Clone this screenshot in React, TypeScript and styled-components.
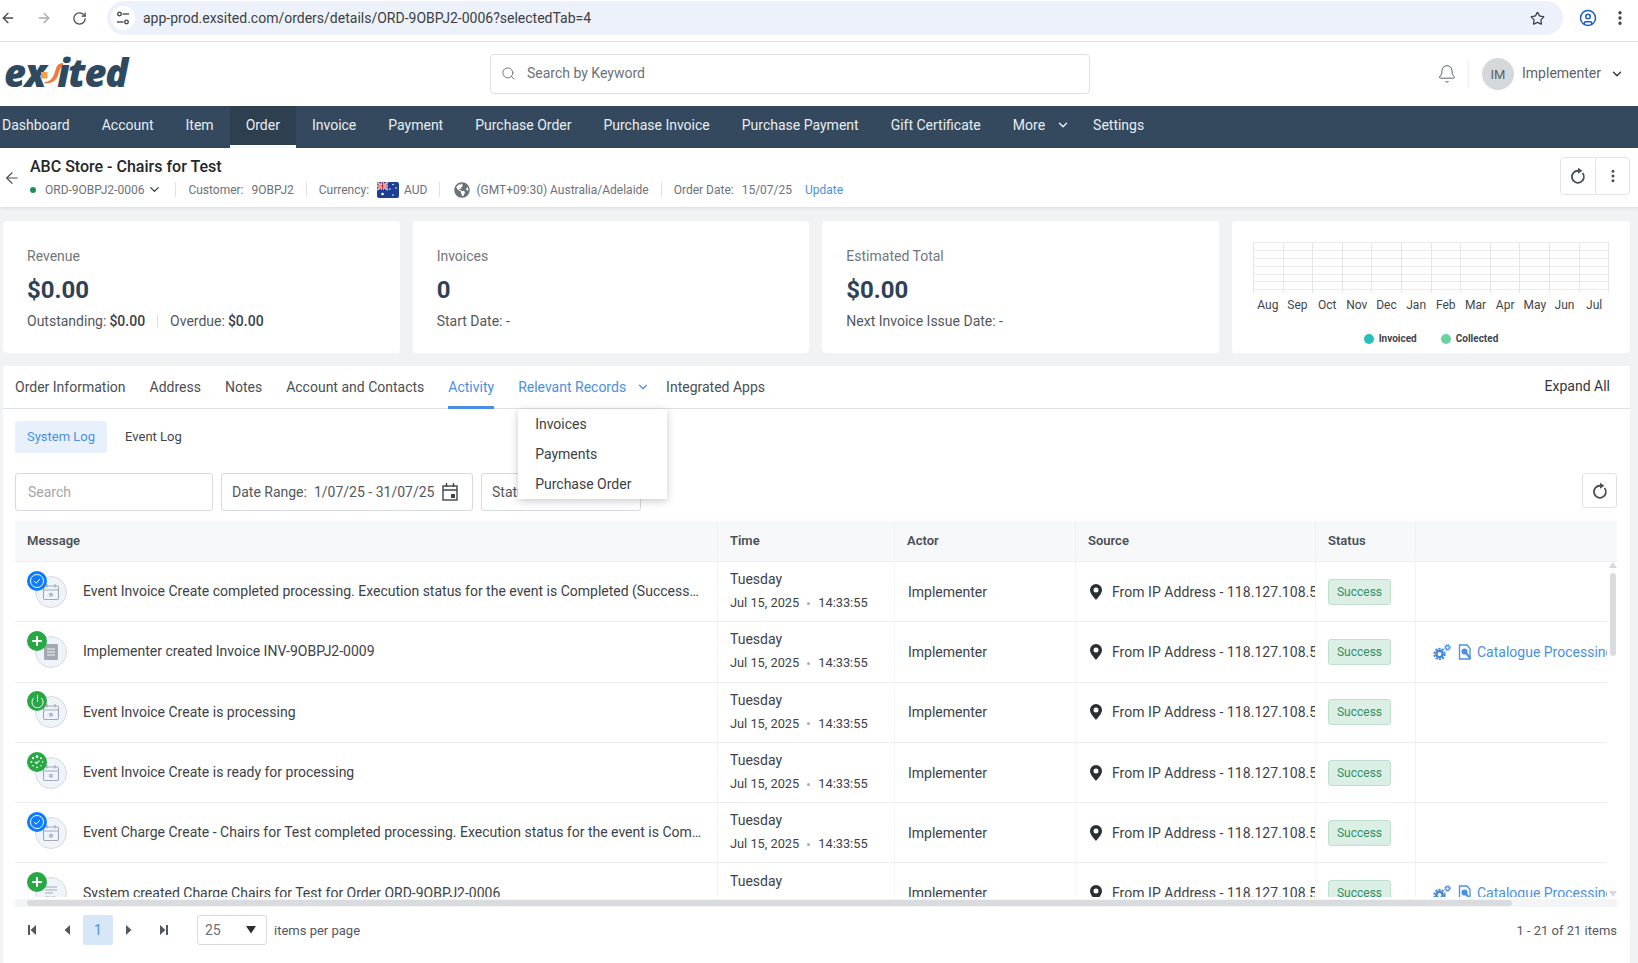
import React from "react";
import styled, { createGlobalStyle } from "styled-components";
import { ArrowLeft, ArrowRight, RotateCw, Star, CircleUser, EllipsisVertical, Search, Bell, ChevronDown, Plus, Power } from "lucide-react";
import { FaGlobeAmericas } from "react-icons/fa";

const Global = createGlobalStyle`
  html, body { margin: 0; padding: 0; background: #f0f2f4; }
  * { box-sizing: border-box; }
  body { font-family: Roboto, "Liberation Sans", sans-serif; font-size: 14px; color: #3d4248; }
`;

const Page = styled.div`
  width: 1638px; height: 963px; overflow: hidden; display: flex; flex-direction: column; background: #f0f2f4;
`;

/* browser chrome */
const BrowserBar = styled.div`
  height: 42px; flex: none; background: #fff; border-bottom: 1px solid #dfe1e4; display: flex; align-items: flex-start;
  padding: 1px 0 0 0;
`;
const NavIcons = styled.div`
  width: 107px; height: 34px; display: flex; align-items: center; flex: none; gap: 20px; color: #474a4f;
`;
const UrlBar = styled.div`
  width: 1456px; height: 34px; border-radius: 17px; background: #edf2fa; display: flex; align-items: center; flex: none;
  padding: 0 18px 0 4px; color: #3c4043; font-size: 14px;
`;
const TuneBadge = styled.span`
  width: 24px; height: 24px; border-radius: 50%; background: #fff; display: flex; align-items: center; justify-content: center; margin-right: 8px; flex: none;
`;
const UrlText = styled.span` flex: 1; `;
const BrowserRight = styled.div`
  height: 34px; flex: 1; display: flex; align-items: center; gap: 14px; padding-left: 16px; color: #1a5fc8;
`;

/* app header */
const Header = styled.header`
  height: 64px; flex: none; background: #fff; display: flex; align-items: center; padding: 0 14px 0 4px;
`;
const Logo = styled.div`
  width: 486px; display: flex; align-items: baseline; color: #2f4a60; font-family: "Open Sans", sans-serif; font-weight: 800; font-style: italic; font-size: 38px; line-height: 40px; letter-spacing: -1.2px; height: 40px; margin-top: -4px;
`;
const LogoSwoosh = styled.svg` width: 24px; height: 30px; margin: 0 -7px 0 -5px; flex: none; align-self: center; `;
const SearchBox = styled.div`
  width: 600px; height: 40px; border: 1px solid #dcdfe3; border-radius: 4px; display: flex; align-items: center; gap: 11px; padding: 0 10px 2px; color: #6c7177; font-size: 14px; flex: none;
`;
const HeaderRight = styled.div` flex: 1; display: flex; align-items: center; justify-content: flex-end; color: #5d6268; `;
const BellWrap = styled.div`
  height: 28px; width: 32px; display: flex; align-items: center; margin-right: 13px; border-right: 1px solid #eceef0; color: #5d6268;
`;
const Avatar = styled.div`
  width: 32px; height: 32px; border-radius: 50%; background: #d5d8db; color: #5c6167; font-size: 13px; display: flex; align-items: center; justify-content: center; margin-right: 8px;
`;
const UserName = styled.span` padding-bottom: 2px; `;
const UserChevron = styled.span` display: flex; margin-left: 9px; color: #33373c; `;

/* nav */
const Nav = styled.nav`
  height: 42px; flex: none; background: #34495e; display: flex; align-items: stretch; color: #e9edf1; font-size: 14px;
`;
const NavItem = styled.a<{ $active?: boolean; $tight?: boolean }>`
  display: flex; align-items: center; gap: 11px; padding: 0 ${(p) => (p.$tight ? "7px" : "16px")} 1px 16px; height: 42px;
  &:first-child { padding-left: 2px; }
  background: ${(p) => (p.$active ? "#2e3f50" : "transparent")};
  border-bottom: 3px solid ${(p) => (p.$active ? "#fff" : "transparent")};
`;

/* order bar */
const OrderBar = styled.div`
  height: 59px; flex: none; background: #fff; box-shadow: 0 1px 4px rgba(0,0,0,.1); display: flex; align-items: center; padding: 0 8px 0 3px; position: relative;
`;
const BackCell = styled.div` width: 27px; display: flex; align-items: center; color: #4a4f55; `;
const OrderInfo = styled.div` flex: 1; display: flex; flex-direction: column; gap: 5px; padding-bottom: 1px; `;
const OrderTitle = styled.div` font-size: 16px; font-weight: 500; color: #23272b; line-height: 20px; `;
const Meta = styled.div` display: flex; align-items: center; font-size: 12px; color: #6c7278; line-height: 16px; `;
const Dot = styled.span` width: 6px; height: 6px; border-radius: 50%; background: #1e8e5a; margin: 0 9px 0 0; `;
const MetaPart = styled.span<{ $gap?: number }>`
  display: inline-flex; align-items: center; gap: ${(p) => p.$gap ?? 8}px;
`;
const MetaSep = styled.span<{ $l?: number; $r?: number }>`
  width: 1px; height: 15px; background: #dfe2e5; flex: none; margin: 0 ${(p) => p.$r ?? 12}px 0 ${(p) => p.$l ?? 12}px;
`;
const OrderChevron = styled.span` display: flex; margin-left: 3px; color: #33373c; `;
const FlagText = styled.span` margin-left: -3px; `;
const LinkText = styled.span` color: #4a90e2; margin-left: 5px; `;
const IconGroup = styled.div`
  display: flex; height: 38px; border: 1px solid #e2e4e7; border-radius: 4px; color: #4a4f55; margin-top: -3px;
`;
const IconCell = styled.div`
  width: 34px; display: flex; align-items: center; justify-content: center;
  & + & { border-left: 1px solid #e2e4e7; }
`;

/* cards */
const Cards = styled.div`
  flex: none; display: grid; grid-template-columns: repeat(4, 1fr); gap: 13px; padding: 14px 8px 13px 3px;
`;
const Card = styled.div`
  height: 132px; background: #fff; border-radius: 4px; padding: 24px 24px 0; display: flex; flex-direction: column;
`;
const CardLabel = styled.div` font-size: 14px; color: #71767c; line-height: 22px; `;
const CardValue = styled.div` font-size: 24px; font-weight: 700; color: #2f4155; line-height: 30px; margin-top: 8px; `;
const CardSub = styled.div` font-size: 14px; color: #53585e; line-height: 20px; margin-top: 6px; display: flex; align-items: center; `;
const SubStrong = styled.span` font-weight: 500; color: #3b4046; margin-left: 3px; `;
const SubSep = styled.span` width: 1px; height: 14px; background: #dfe2e5; margin: 0 12px; `;
const ChartCard = styled(Card)` padding: 21px 21px 0; `;
const ChartSvg = styled.svg` display: block; width: 356px; height: 51px; `;
const Months = styled.div`
  display: grid; grid-template-columns: repeat(12, 1fr); font-size: 12px; color: #3f444a; text-align: center; line-height: 16px; margin-top: 4px;
`;
const Legend = styled.div`
  display: flex; justify-content: center; gap: 24px; margin-top: 19px; font-size: 10px; font-weight: 700; color: #3f444a; line-height: 14px;
`;
const LegendItem = styled.span` display: inline-flex; align-items: center; gap: 5px; `;
const LegendDot = styled.span<{ $c: string }>` width: 10px; height: 10px; border-radius: 50%; background: ${(p) => p.$c}; `;

/* panel */
const Panel = styled.section`
  flex: 1; min-height: 0; background: #fff; margin: 0 8px 0 3px; display: flex; flex-direction: column; padding: 0 13px 0 12px;
`;
const Tabs = styled.div`
  height: 43px; flex: none; border-bottom: 1px solid #dfe2e5; margin: 0 -13px 0 -12px; padding: 0 20px 0 12px; display: flex; align-items: stretch; gap: 24px; font-size: 14px; color: #4a4f55;
`;
const Tab = styled.div<{ $active?: boolean; $blue?: boolean; $tight?: boolean }>`
  display: flex; align-items: center; gap: 10px; height: 43px; position: relative; padding-bottom: 2px;
  color: ${(p) => (p.$active || p.$blue ? "#4a90e2" : "#4a4f55")};
  border-bottom: ${(p) => (p.$active ? "3px solid #4a90e2" : "0")};
  ${(p) => (p.$active ? "padding-bottom: 0; padding-top: 1px;" : "")}
  ${(p) => (p.$tight ? "margin-right: -8px;" : "")}
`;
const ExpandAll = styled.div` margin-left: auto; display: flex; align-items: center; color: #33373c; font-size: 14px; padding-bottom: 3px; `;
const Menu = styled.div`
  position: absolute; left: 0; top: 43px; width: 149px; height: 90px; background: #fff; box-shadow: 0 2px 8px rgba(0,0,0,.22); z-index: 5; padding: 0 17px; color: #3a3f45; display: flex; flex-direction: column; justify-content: space-around;
`;
const SubTabs = styled.div` flex: none; display: flex; margin-top: 12px; height: 32px; font-size: 13px; gap: 6px; `;
const SubTab = styled.div<{ $active?: boolean }>`
  padding: 0 12px 2px; display: flex; align-items: center; border-radius: 3px;
  background: ${(p) => (p.$active ? "#e8f1fb" : "transparent")}; color: ${(p) => (p.$active ? "#4a90e2" : "#3f444a")};
`;
const Filters = styled.div` flex: none; margin-top: 20px; height: 37px; display: flex; gap: 8px; `;
const Field = styled.div<{ $w: number }>`
  width: ${(p) => p.$w}px; height: 38px; border: 1px solid #d6d9dd; border-radius: 3px; display: flex; align-items: center; padding: 0 10px; font-size: 14px; color: #53585e; gap: 7px; white-space: nowrap; overflow: hidden;
`;
const DateValue = styled.span` margin-right: 1px; `;
const Placeholder = styled.span` color: #a2a6ab; padding-left: 2px; `;
const FilterRefresh = styled.div`
  margin-left: auto; width: 35px; height: 35px; border: 1px solid #e0e2e5; border-radius: 3px; display: flex; align-items: center; justify-content: center; color: #4a4f55;
`;

/* table */
const COLS = "702px 177px 181px 240px 100px 192px";
const HeadRow = styled.div`
  flex: none; margin-top: 11px; height: 41px; background: #f7f8fa; border-bottom: 1px solid #eceef0; display: grid; grid-template-columns: ${COLS} 10px;
  font-size: 13px; font-weight: 600; color: #4b5056; padding-bottom: 2px;
`;
const HeadCell = styled.div`
  display: flex; align-items: center; padding-left: 12px; & + & { border-left: 1px solid #eef0f2; }
`;
const BodyWrap = styled.div` flex: none; display: flex; height: 335px; `;
const Clip = styled.div` width: 1592px; overflow: hidden; flex: none; `;
const Row = styled.div`
  height: 60.3px; display: grid; grid-template-columns: ${COLS}; border-bottom: 1px solid #eceef0;
`;
const Cell = styled.div`
  display: flex; align-items: center; padding-left: 13px; min-width: 0; overflow: hidden; white-space: nowrap; color: #3d4248;
  border-left: 1px solid #f3f4f6;
`;
const MsgCell = styled(Cell)` padding-left: 0; border-left: 0; `;
const StatusCell = styled(Cell)` padding-left: 12px; `;
const IconStack = styled.div` width: 68px; height: 60px; flex: none; position: relative; `;
const BigCircle = styled.div`
  position: absolute; left: 20px; top: 14px; width: 32px; height: 32px; border-radius: 50%; background: #eff4fb; border: 1px solid #d6dae0; display: flex; align-items: center; justify-content: center; color: #a3a9b3;
`;
const Badge = styled.div<{ $c: string }>`
  position: absolute; left: 12px; top: 9px; width: 20px; height: 20px; border-radius: 50%; background: ${(p) => p.$c}; color: #fff; display: flex; align-items: center; justify-content: center;
`;
const MsgText = styled.div` min-width: 0; flex: none; width: 620px; overflow: hidden; text-overflow: ellipsis; white-space: nowrap; padding-bottom: 1px; `;
const TimeCell = styled(Cell)` flex-direction: column; align-items: flex-start; justify-content: center; gap: 6px; line-height: 18px; padding-left: 12px; `;
const TimeDay = styled.div` font-size: 14px; margin-top: -1px; `;
const TimeDate = styled.div` font-size: 12.8px; display: flex; align-items: center; gap: 6px; `;
const TimeDot = styled.span` width: 3px; height: 3px; border-radius: 50%; background: #a9adb2; margin: 0 2px; `;
const Source = styled.div` display: flex; align-items: center; gap: 10px; padding-left: 1px; letter-spacing: .04px; `;
const Success = styled.div`
  height: 26px; width: 63px; border: 1px solid #bfdfcf; background: #dcefe5; color: #2f8f66; border-radius: 3px; font-size: 12px; display: flex; align-items: center; justify-content: center;
`;
const ActionLink = styled.div` display: flex; align-items: center; color: #4a90e2; gap: 7px; padding-left: 4px; `;
const LinkLabel = styled.span` margin-left: -2px; `;
const VTrack = styled.div`
  width: 8px; margin-left: 2px; flex: none; display: flex; flex-direction: column; align-items: center; color: #d5d8dc;
`;
const VThumb = styled.div` width: 6px; height: 83px; background: #d9dcdf; border-radius: 3px; margin-top: 5px; `;
const VSpacer = styled.div` flex: 1; `;
const HTrack = styled.div`
  flex: none; height: 8px; margin-top: 2px; background: #f3f4f5; display: flex; align-items: center; padding-left: 12px;
`;
const HThumb = styled.div` width: 1485px; height: 6px; background: #d9dcdf; border-radius: 3px; `;
const Footer = styled.div` flex: none; height: 50px; display: flex; align-items: center; padding-bottom: 4px; font-size: 13px; color: #53585e; `;
const Pager = styled.div<{ $ml?: number }>`
  width: 30px; height: 30px; display: flex; align-items: center; justify-content: center; color: #53585e; margin-left: ${(p) => p.$ml ?? 0}px;
`;
const PageNo = styled(Pager)` background: #d8e7f8; color: #4a90e2; font-size: 14px; border-radius: 2px; `;
const PerPage = styled.div`
  width: 70px; height: 30px; border: 1px solid #d6d9dd; border-radius: 3px; margin: 0 7px 0 19px; display: flex; align-items: center; justify-content: space-between; padding: 0 10px 0 7px; font-size: 14px; color: #6c7177;
`;
const PerPageArrow = styled.span` display: flex; color: #2b2e33; `;
const Range = styled.div` margin-left: auto; font-size: 13px; color: #53585e; `;

const Refresh = ({ size = 18 }: { size?: number }) => (
  <svg width={size} height={size} viewBox="0 0 18 18" fill="none">
    <path d="M9.500 3.800A6 6 0 1 0 13.600 6" stroke="currentColor" strokeWidth="1.800" />
    <path d="M9 .8L13.400 3.800L9 6.800z" fill="currentColor" />
  </svg>
);
const Tune = () => (
  <svg width="14" height="14" viewBox="0 0 14 14" fill="none" stroke="#3c4043" strokeWidth="1.3">
    <circle cx="3.500" cy="3" r="1.800" /><path d="M6.500 3H13" />
    <circle cx="10.500" cy="11" r="1.800" /><path d="M1 11h6.500" />
  </svg>
);
const Flag = () => (
  <svg width="22" height="16" viewBox="0 0 22 16">
    <rect width="22" height="16" rx="2" fill="#1c3f94" />
    <path d="M0 0l11 8M11 0L0 8" stroke="#fff" strokeWidth="1.600" />
    <path d="M0 0l11 8M11 0L0 8" stroke="#d8202f" strokeWidth=".6" />
    <path d="M5.500 0v8M0 4h11" stroke="#fff" strokeWidth="2.400" />
    <path d="M5.500 0v8M0 4h11" stroke="#d8202f" strokeWidth="1.200" />
    <g fill="#fff"><circle cx="5.500" cy="12" r="1.300" /><circle cx="16" cy="2.500" r=".8" /><circle cx="16" cy="13" r=".8" /><circle cx="13" cy="7" r=".8" /><circle cx="19" cy="6" r=".8" /></g>
  </svg>
);
const CalendarGear = () => (
  <svg width="18" height="18" viewBox="0 0 18 18" fill="none" stroke="currentColor" strokeWidth="1.100">
    <rect x="1.500" y="3" width="15" height="13.500" rx="1.500" /><path d="M1.500 7h15M5 1v3.500M13 1v3.500" />
    <circle cx="9" cy="11.700" r="1.400" strokeWidth="1.300" />
  </svg>
);
const DocIcon = () => (
  <svg width="14" height="16" viewBox="0 0 14 16"><rect width="14" height="16" rx="1" fill="#a3a9b3" /><path d="M3 5h8M3 8h8M3 11h8" stroke="#eff4fb" strokeWidth="1.200" /></svg>
);
const ListIcon = () => (
  <svg width="16" height="18" viewBox="0 0 16 18" fill="none" stroke="currentColor" strokeWidth="1.200"><path d="M2 3h12M2 6h12M2 9h8" /><path d="M3 13h3v3H3zM9 13h3v3H9z" fill="currentColor" /></svg>
);
const Spinner = () => (
  <svg width="14" height="14" viewBox="0 0 14 14" fill="#fff">
    <circle cx="7" cy="1.600" r="1.300" /><circle cx="11" cy="3.200" r="1" /><circle cx="12.600" cy="7" r=".8" /><circle cx="3" cy="3.200" r="1.100" /><circle cx="1.400" cy="7" r="1" /><circle cx="3" cy="10.800" r=".8" /><circle cx="7" cy="12.400" r=".8" /><circle cx="11" cy="10.800" r=".7" />
    <path d="M5 7l1.500 1.500L9.400 5.600" stroke="#fff" strokeWidth="1.200" fill="none" />
  </svg>
);
const Pin = () => (
  <svg width="12" height="16" viewBox="0 0 12 16">
    <path fillRule="evenodd" fill="#2b2e33" d="M6 0a6 6 0 0 1 6 6c0 3.800-4.200 7.800-6 10C4.200 13.800 0 9.800 0 6a6 6 0 0 1 6-6zm0 3.500a2.500 2.500 0 1 0 0 5 2.500 2.500 0 0 0 0-5z" />
  </svg>
);
const Gears = () => (
  <svg width="18" height="16" viewBox="0 0 18 16" fill="none" stroke="#3f84d6">
    <circle cx="6.500" cy="10" r="3.200" strokeWidth="2.400" />
    <circle cx="6.500" cy="10" r="5.300" strokeWidth="1.800" strokeDasharray="2.100 1.230" />
    <circle cx="14.500" cy="3.500" r="1.800" strokeWidth="1.200" />
    <circle cx="14.500" cy="3.500" r="2.900" strokeWidth="1" strokeDasharray="1.300 1" />
  </svg>
);
const DocWrench = () => (
  <svg width="14" height="16" viewBox="0 0 14 16" fill="none" stroke="#4a90e2" strokeWidth="1.300">
    <path d="M9 1H1.500v14H12V4.500z" /><circle cx="6.500" cy="7.500" r="2.400" fill="#4a90e2" /><path d="M8 9l4.500 5.500" strokeWidth="2" />
  </svg>
);
const Tri = ({ dir, bar }: { dir: "l" | "r"; bar?: boolean }) => (
  <svg width="9" height="10" viewBox="0 0 9 10" fill="currentColor">
    {dir === "l" ? <path d="M8 0v10L2.500 5z" /> : <path d="M1 0v10L6.500 5z" />}
    {bar && (dir === "l" ? <rect x="0" y="0" width="2" height="10" /> : <rect x="7" y="0" width="2" height="10" />)}
  </svg>
);
const Up = ({ down, size = 8 }: { down?: boolean; size?: number }) => (
  <svg width={size} height={(size * 3) / 4} viewBox="0 0 8 6" fill="currentColor">{down ? <path d="M0 0h8L4 6z" /> : <path d="M0 6h8L4 0z" />}</svg>
);
const CalFilled = () => (
  <svg width="16" height="18" viewBox="0 0 16 18" fill="none" stroke="#3f444a" strokeWidth="1.400">
    <rect x="1" y="3" width="14" height="14" /><path d="M1 7h14M4.500 0v4M11.500 0v4" /><rect x="9" y="11" width="4" height="4" fill="#3f444a" stroke="none" />
  </svg>
);

type RowData = { msg: string; badge: "check" | "plus" | "power" | "spin"; icon: "cal" | "doc" | "list"; link?: boolean };
const rows: RowData[] = [
  { msg: "Event Invoice Create completed processing. Execution status for the event is Completed (Successful).", badge: "check", icon: "cal" },
  { msg: "Implementer created Invoice INV-9OBPJ2-0009", badge: "plus", icon: "doc", link: true },
  { msg: "Event Invoice Create is processing", badge: "power", icon: "cal" },
  { msg: "Event Invoice Create is ready for processing", badge: "spin", icon: "cal" },
  { msg: "Event Charge Create - Chairs for Test completed processing. Execution status for the event is Completed (Successful).", badge: "check", icon: "cal" },
  { msg: "System created Charge Chairs for Test for Order ORD-9OBPJ2-0006", badge: "plus", icon: "list", link: true },
];
const badgeColor = { check: "#0b7bff", plus: "#28a745", power: "#28a745", spin: "#28a745" };
const navItems = ["Dashboard", "Account", "Item", "Order", "Invoice", "Payment", "Purchase Order", "Purchase Invoice", "Purchase Payment", "Gift Certificate"];
const months = ["Aug", "Sep", "Oct", "Nov", "Dec", "Jan", "Feb", "Mar", "Apr", "May", "Jun", "Jul"];

const BadgeIcon = ({ kind }: { kind: RowData["badge"] }) => {
  if (kind === "check")
    return (
      <svg width="16" height="16" viewBox="0 0 16 16" fill="none" stroke="#fff" strokeWidth="1"><circle cx="8" cy="8" r="6.500" /><path d="M5 8l2.200 2.200L11 6" /></svg>
    );
  if (kind === "plus") return <Plus size={14} strokeWidth={3.5} />;
  if (kind === "power") return <Power size={15} strokeWidth={1.5} />;
  return <Spinner />;
};

export default function App() {
  return (
    <Page>
      <Global />
      <BrowserBar>
        <NavIcons>
          <ArrowLeft size={16} strokeWidth={2} />
          <ArrowRight size={16} strokeWidth={2} color="#a9acb0" />
          <RotateCw size={15} strokeWidth={2} />
        </NavIcons>
        <UrlBar>
          <TuneBadge><Tune /></TuneBadge>
          <UrlText>app-prod.exsited.com/orders/details/ORD-9OBPJ2-0006?selectedTab=4</UrlText>
          <Star size={15} color="#3c4043" strokeWidth={2} />
        </UrlBar>
        <BrowserRight>
          <CircleUser size={18} strokeWidth={2} />
          <EllipsisVertical size={18} strokeWidth={2.5} color="#3c4043" />
        </BrowserRight>
      </BrowserBar>

      <Header>
        <Logo>
          ex
          <LogoSwoosh viewBox="0 0 24 30">
            <rect x="1" y="15" width="6.500" height="6.500" fill="#f5a04a" />
            <path d="M23 6c-3 0-5 1-6.500 4l-2 6c-1.500 4-3 8-9.500 9 -1 .2 -1 1.500 0 1.500 7 0 11-3 12.500-7l2-6c.7-2 2-3 3.500-3z" fill="#ee7b3c" />
          </LogoSwoosh>
          ited
        </Logo>
        <SearchBox><Search size={15} strokeWidth={1.5} />Search by Keyword</SearchBox>
        <HeaderRight>
          <BellWrap><Bell size={20} strokeWidth={1.2} /></BellWrap>
          <Avatar>IM</Avatar>
          <UserName>Implementer</UserName>
          <UserChevron><ChevronDown size={14} strokeWidth={2.5} /></UserChevron>
        </HeaderRight>
      </Header>

      <Nav>
        {navItems.map((n) => (<NavItem key={n} $active={n === "Order"}>{n}</NavItem>))}
        <NavItem $tight>More<ChevronDown size={14} strokeWidth={2.5} /></NavItem>
        <NavItem>Settings</NavItem>
      </Nav>

      <OrderBar>
        <BackCell><ArrowLeft size={18} strokeWidth={1.5} /></BackCell>
        <OrderInfo>
          <OrderTitle>ABC Store - Chairs for Test</OrderTitle>
          <Meta>
            <MetaPart $gap={0}><Dot />ORD-9OBPJ2-0006<OrderChevron><ChevronDown size={15} strokeWidth={2} /></OrderChevron></MetaPart>
            <MetaSep $l={13} $r={12} />
            <MetaPart $gap={8}>Customer:<span>9OBPJ2</span></MetaPart>
            <MetaSep />
            <MetaPart $gap={8}>Currency:<Flag /><FlagText>AUD</FlagText></MetaPart>
            <MetaSep $r={14} />
            <MetaPart $gap={6}><FaGlobeAmericas size={16} color="#6c7278" />(GMT+09:30) Australia/Adelaide</MetaPart>
            <MetaSep />
            <MetaPart $gap={8}>Order Date:<span>15/07/25</span><LinkText>Update</LinkText></MetaPart>
          </Meta>
        </OrderInfo>
        <IconGroup>
          <IconCell><Refresh /></IconCell>
          <IconCell><EllipsisVertical size={16} strokeWidth={2.5} /></IconCell>
        </IconGroup>
      </OrderBar>

      <Cards>
        <Card>
          <CardLabel>Revenue</CardLabel>
          <CardValue>$0.00</CardValue>
          <CardSub>Outstanding:<SubStrong>$0.00</SubStrong><SubSep />Overdue:<SubStrong>$0.00</SubStrong></CardSub>
        </Card>
        <Card>
          <CardLabel>Invoices</CardLabel>
          <CardValue>0</CardValue>
          <CardSub>Start Date: -</CardSub>
        </Card>
        <Card>
          <CardLabel>Estimated Total</CardLabel>
          <CardValue>$0.00</CardValue>
          <CardSub>Next Invoice Issue Date: -</CardSub>
        </Card>
        <ChartCard>
          <ChartSvg viewBox="0 0 356 51" fill="none">
            <g stroke="#e9ebed" strokeWidth="1">
              {[0.5, 8.5, 16.5, 24.5, 32.5, 39.5, 47.5].map((y) => (<path key={y} d={`M0 ${y}H356`} />))}
            </g>
            <g stroke="#e4e6e8" strokeWidth="1">
              {Array.from({ length: 13 }, (_, i) => Math.round(i * 29.6) + 0.5).map((x) => (<path key={x} d={`M${x} 0V51`} />))}
            </g>
          </ChartSvg>
          <Months>{months.map((m) => (<span key={m}>{m}</span>))}</Months>
          <Legend>
            <LegendItem><LegendDot $c="#26c0b8" />Invoiced</LegendItem>
            <LegendItem><LegendDot $c="#68d3a3" />Collected</LegendItem>
          </Legend>
        </ChartCard>
      </Cards>

      <Panel>
        <Tabs>
          <Tab>Order Information</Tab>
          <Tab>Address</Tab>
          <Tab>Notes</Tab>
          <Tab>Account and Contacts</Tab>
          <Tab $active>Activity</Tab>
          <Tab $blue $tight>
            Relevant Records<ChevronDown size={14} strokeWidth={2} />
            <Menu><span>Invoices</span><span>Payments</span><span>Purchase Order</span></Menu>
          </Tab>
          <Tab>Integrated Apps</Tab>
          <ExpandAll>Expand All</ExpandAll>
        </Tabs>
        <SubTabs>
          <SubTab $active>System Log</SubTab>
          <SubTab>Event Log</SubTab>
        </SubTabs>
        <Filters>
          <Field $w={198}><Placeholder>Search</Placeholder></Field>
          <Field $w={252}>Date Range:<DateValue>1/07/25 - 31/07/25</DateValue><CalFilled /></Field>
          <Field $w={160}>Status: All</Field>
          <FilterRefresh><Refresh /></FilterRefresh>
        </Filters>
        <HeadRow>
          <HeadCell>Message</HeadCell>
          <HeadCell>Time</HeadCell>
          <HeadCell>Actor</HeadCell>
          <HeadCell>Source</HeadCell>
          <HeadCell>Status</HeadCell>
          <HeadCell />
        </HeadRow>
        <BodyWrap>
          <Clip>
            {rows.map((r) => (
              <Row key={r.msg}>
                <MsgCell>
                  <IconStack>
                    <BigCircle>
                      {r.icon === "cal" ? <CalendarGear /> : r.icon === "doc" ? <DocIcon /> : <ListIcon />}
                    </BigCircle>
                    <Badge $c={badgeColor[r.badge]}><BadgeIcon kind={r.badge} /></Badge>
                  </IconStack>
                  <MsgText>{r.msg}</MsgText>
                </MsgCell>
                <TimeCell>
                  <TimeDay>Tuesday</TimeDay>
                  <TimeDate>Jul 15, 2025<TimeDot />14:33:55</TimeDate>
                </TimeCell>
                <Cell>Implementer</Cell>
                <Cell><Source><Pin />From IP Address - 118.127.108.53</Source></Cell>
                <StatusCell><Success>Success</Success></StatusCell>
                <Cell>
                  {r.link && (
                    <ActionLink>
                      <Gears />
                      <DocWrench />
                      <LinkLabel>Catalogue Processing</LinkLabel>
                    </ActionLink>
                  )}
                </Cell>
              </Row>
            ))}
          </Clip>
          <VTrack>
            <Up />
            <VThumb />
            <VSpacer />
            <Up down />
          </VTrack>
        </BodyWrap>
        <HTrack><HThumb /></HTrack>
        <Footer>
          <Pager $ml={2}><Tri dir="l" bar /></Pager>
          <Pager $ml={4}><Tri dir="l" /></Pager>
          <PageNo $ml={2}>1</PageNo>
          <Pager $ml={1}><Tri dir="r" /></Pager>
          <Pager $ml={4}><Tri dir="r" bar /></Pager>
          <PerPage>25<PerPageArrow><Up down size={10} /></PerPageArrow></PerPage>
          items per page
          <Range>1 - 21 of 21 items</Range>
        </Footer>
      </Panel>
    </Page>
  );
}
